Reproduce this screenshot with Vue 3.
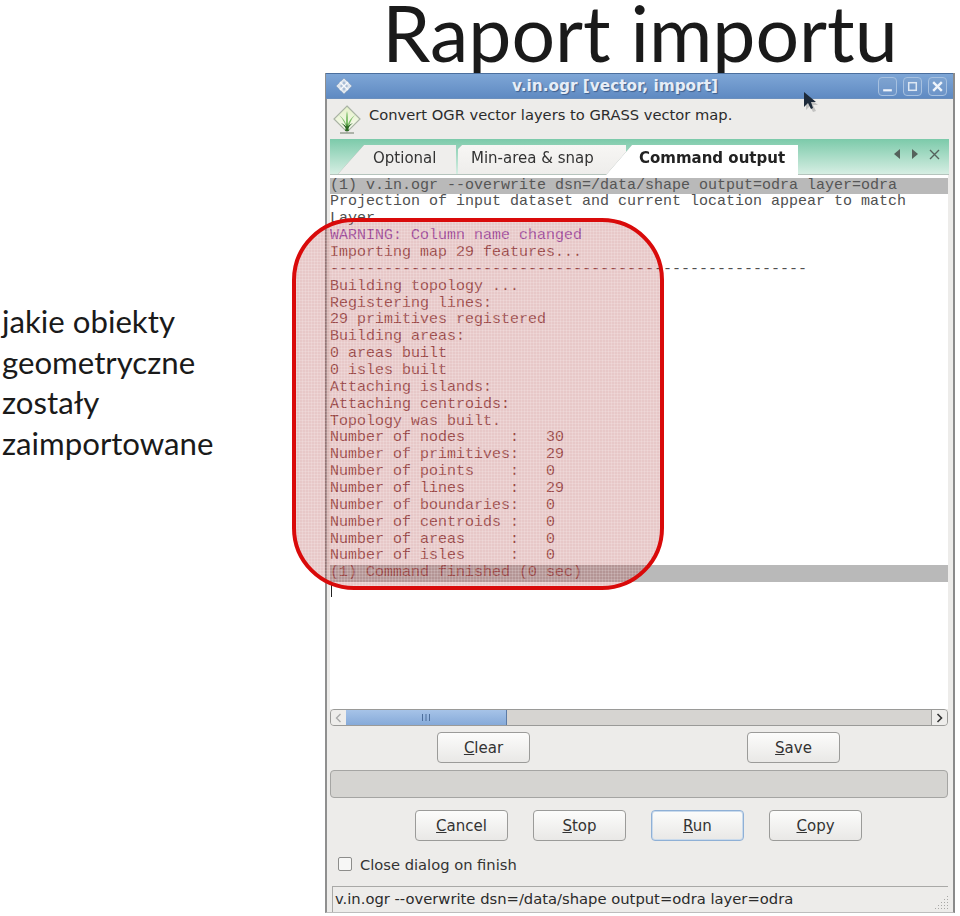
<script setup>
const lines = [
  { t: '(1) v.in.ogr --overwrite dsn=/data/shape output=odra layer=odra', c: 'cmd' },
  { t: 'Projection of input dataset and current location appear to match' },
  { t: 'Layer' },
  { t: 'WARNING: Column name changed', c: 'warn' },
  { t: 'Importing map 29 features...', c: 'hl' },
  { t: '------------------------------------', c: 'hl', rest: '-----------------' },
  { t: 'Building topology ...', c: 'hl' },
  { t: 'Registering lines:', c: 'hl' },
  { t: '29 primitives registered', c: 'hl' },
  { t: 'Building areas:', c: 'hl' },
  { t: '0 areas built', c: 'hl' },
  { t: '0 isles built', c: 'hl' },
  { t: 'Attaching islands:', c: 'hl' },
  { t: 'Attaching centroids:', c: 'hl' },
  { t: 'Topology was built.', c: 'hl' },
  { t: 'Number of nodes     :   30', c: 'hl' },
  { t: 'Number of primitives:   29', c: 'hl' },
  { t: 'Number of points    :   0', c: 'hl' },
  { t: 'Number of lines     :   29', c: 'hl' },
  { t: 'Number of boundaries:   0', c: 'hl' },
  { t: 'Number of centroids :   0', c: 'hl' },
  { t: 'Number of areas     :   0', c: 'hl' },
  { t: 'Number of isles     :   0', c: 'hl' },
  { t: '(1) Command finished (0 sec)', c: 'cmd hl' }
]
const caption = ['jakie obiekty', 'geometryczne', 'zostały', 'zaimportowane']
</script>

<template>
  <div class="page">
    <h1 class="title">Raport importu</h1>
    <div class="body">
      <div class="caption">
        <div v-for="c in caption" :key="c">{{ c }}</div>
      </div>
      <div class="window">
        <div class="titlebar">
          <svg class="wm-icon" width="18" height="18" viewBox="0 0 18 18">
            <path d="M9 1 17 9 9 17 1 9Z" fill="#dfe6ee" stroke="#8fa9c9" />
            <path d="M9 4 5 9l4 5 4-5Z" fill="#a9bdd6" />
            <path d="M5 5l8 8M13 5l-8 8" stroke="#f7f9fb" stroke-width="1.5" />
          </svg>
          <span class="wm-title">v.in.ogr [vector, import]</span>
          <div class="wm-btns">
            <span class="wm-btn"><svg width="13" height="13" viewBox="0 0 12 12"><path d="M2 9.500h8" stroke="#eef3fa" stroke-width="2" /></svg></span>
            <span class="wm-btn"><svg width="13" height="13" viewBox="0 0 12 12"><rect x="2.500" y="2.500" width="7" height="7" fill="none" stroke="#dde7f3" stroke-width="1.400" /></svg></span>
            <span class="wm-btn"><svg width="13" height="13" viewBox="0 0 12 12"><path d="M2 2l8 8M10 2l-8 8" stroke="#eef3fa" stroke-width="2.200" /></svg></span>
          </div>
        </div>

        <div class="header">
          <svg class="logo" width="28" height="32" viewBox="0 0 28 32">
            <defs>
              <linearGradient id="lg" x1="0" y1="0" x2="0" y2="1">
                <stop offset="0" stop-color="#e4f1c8" />
                <stop offset="1" stop-color="#f9fbf3" />
              </linearGradient>
            </defs>
            <path d="M14 2 27 15 14 28 1 15Z" fill="url(#lg)" stroke="#a9b3a4" stroke-width="1.200" />
            <path d="M14 26C13 21 10 15 6 11c4 3 6 6 7 9 0-5 0-9 1-13 1 4 1 8 1 13 1-3 3-6 7-9-4 4-6 10-7 15Z" fill="#7fbf6b" />
            <path d="M14 27c-1-3-3-6-6-8 3 1 5 3 6 5 1-2 3-4 6-5-3 2-5 5-6 8Z" fill="#1f5a1b" />
            <path d="M12 27l2-8 2 8Z" fill="#2c6a22" />
            <path d="M7 29h14" stroke="#6f7a68" stroke-width="1" />
          </svg>
          <span>Convert OGR vector layers to GRASS vector map.</span>
        </div>

        <div class="tabs">
          <div class="tab tab-opt"><div class="tab-in">Optional</div></div>
          <div class="tab tab-min"><div class="tab-in">Min-area &amp; snap</div></div>
          <div class="tab tab-cmd"><div class="tab-in">Command output</div></div>
          <div class="tab-nav">
            <svg width="8" height="10" viewBox="0 0 8 10"><path d="M7 0v10L1 5Z" fill="#55625c" /></svg>
            <svg width="8" height="10" viewBox="0 0 8 10"><path d="M1 0v10l6-5Z" fill="#55625c" /></svg>
            <svg width="11" height="11" viewBox="0 0 11 11"><path d="M1 1l9 9M10 1l-9 9" stroke="#55625c" stroke-width="1.400" /></svg>
          </div>
        </div>

        <div class="output">
          <div v-for="(l, i) in lines" :key="i" class="line" :class="l.c">{{ l.t }}<span v-if="l.rest" class="rest">{{ l.rest }}</span></div>
          <div class="cursor"></div>
        </div>

        <div class="scrollbar">
          <span class="sb-btn sb-left"><svg width="7" height="10" viewBox="0 0 7 10"><path d="M5.500 1 1.500 5l4 4" fill="none" stroke="#aaa" stroke-width="1.400" /></svg></span>
          <span class="sb-thumb"><svg width="10" height="7" viewBox="0 0 10 7"><path d="M1.500 0v7M5 0v7M8.500 0v7" stroke="#4d6f9c" stroke-width="1" /></svg></span>
          <span class="sb-trough"></span>
          <span class="sb-btn sb-right"><svg width="7" height="10" viewBox="0 0 7 10"><path d="M1.500 1l4 4-4 4" fill="none" stroke="#333" stroke-width="1.600" /></svg></span>
        </div>

        <div class="row row-top">
          <button class="btn"><u>C</u>lear</button>
          <button class="btn"><u>S</u>ave</button>
        </div>

        <div class="progress"></div>

        <div class="row row-main">
          <button class="btn"><u>C</u>ancel</button>
          <button class="btn"><u>S</u>top</button>
          <button class="btn btn-focus"><u>R</u>un</button>
          <button class="btn"><u>C</u>opy</button>
        </div>

        <label class="check"><span class="box"></span>Close dialog on finish</label>

        <div class="status">
          <span>v.in.ogr --overwrite dsn=/data/shape output=odra layer=odra</span>
          <span class="grip"></span>
        </div>

        <div class="highlight"></div>
        <svg class="pointer" width="16" height="22" viewBox="0 0 16 22">
          <path d="M3 4 3 19 7 15 10 21 13 20 10 14 15 14Z" fill="#9a9a9a" opacity=".5" />
          <path d="M1 1 1 16 5 12 8 18 10 17 8 11 13 11Z" fill="#1d2a3a" />
        </svg>
      </div>
    </div>
  </div>
</template>

<style>
html, body { margin: 0; background: #fff; }
</style>

<style scoped>
.page {
  width: 960px;
  height: 916px;
  overflow: hidden;
  background: #fff;
  font-family: "DejaVu Sans", sans-serif;
  color: #333;
}
.title {
  margin: 0;
  height: 73px;
  padding-left: 320px;
  text-align: center;
  font: 400 77px/59px "Lato", sans-serif;
  color: #1a1a1a;
  padding-top: 3px;
  box-sizing: border-box;
}
.body { display: flex; align-items: flex-start; }
.caption {
  width: 323px;
  margin-left: 2px;
  padding-top: 228px;
  flex: none;
  font: 400 31.200px/40.700px "Lato", sans-serif;
  color: #1a1a1a;
}
.window {
  position: relative;
  box-sizing: border-box;
  width: 630px;
  height: 840px;
  background: #edecea;
  border-left: 2px solid #8f8f8f;
  border-right: 2px solid #8a8a8a;
  border-bottom: 1px solid #bdbdbd;
  display: flex;
  flex-direction: column;
}
.titlebar {
  height: 26px;
  flex: none;
  display: flex;
  align-items: center;
  position: relative;
  margin-left: -1px;
  background: linear-gradient(#7ea6d6, #5f8ac2);
  border-top: 1px solid #4b6f9e;
  box-sizing: border-box;
  border-bottom: 1px solid #6b8fbd;
}
.wm-icon { margin-left: 9px; }
.wm-title {
  position: absolute;
  left: 186px;
  font-size: 15.300px;
  font-weight: 700;
  color: #e6edf7;
  text-shadow: 1px 1px 1px #3e5f8d;
}
.wm-btns { margin-left: auto; margin-right: 6px; display: flex; gap: 6px; }
.wm-btn {
  width: 19px;
  height: 19px;
  box-sizing: border-box;
  display: flex;
  align-items: center;
  justify-content: center;
  border: 1px solid #a7c1e0;
  border-radius: 4px;
  background: linear-gradient(#7ea3d0, #6c94c8);
}
.header {
  height: 40px;
  flex: none;
  display: flex;
  align-items: center;
  padding-left: 6px;
  font-size: 14.700px;
  color: #2b2b2b;
  background: #edecea;
}
.logo { margin-right: 8px; margin-top: 2px; flex: none; }
.header span { position: relative; top: -5px; }
.tabs {
  height: 36px;
  flex: none;
  margin: 0 4px 0 3px;
  display: flex;
  align-items: flex-end;
  background: linear-gradient(#7ccaaa, #d6eee3);
  box-sizing: border-box;
  border-bottom: 1px solid #b5c4bd;
  position: relative;
  font-size: 15px;
}
.tab { filter: drop-shadow(0 0 .6px #8b9a93); height: 29px; flex: none; }
.tab-in { height: 100%; display: flex; align-items: center; box-sizing: border-box; color: #333; padding-bottom: 4px; }
.tab-opt { margin-left: 8px; width: 118px; }
.tab-opt .tab-in {
  padding-left: 35px;
  background: #efeeec;
  clip-path: polygon(0 100%, 26px 0, 100% 0, 100% 100%);
}
.tab-min { margin-left: 2px; width: 168px; }
.tab-min .tab-in {
  padding-left: 13px;
  background: linear-gradient(#f7f6f4, #eeedeb);
  clip-path: polygon(0 4px, 4px 0, 100% 0, 100% 100%, 0 100%);
}
.tab-cmd { margin-left: -20px; width: 192px; height: 30px; margin-bottom: -1px; position: relative; }
.tab-cmd .tab-in {
  padding-left: 33px;
  padding-bottom: 5px;
  background: #fff;
  font-weight: 700;
  color: #222;
  clip-path: polygon(0 100%, 26px 0, 100% 0, 100% 100%);
}
.tab-nav {
  margin-left: auto;
  margin-right: 9px;
  margin-bottom: 5px;
  align-self: center;
  display: flex;
  align-items: center;
  gap: 10px;
}
.output {
  flex: none;
  height: 534px;
  margin: 0 5px 0 3px;
  background: #fff;
  padding-top: 2.500px;
  box-sizing: border-box;
  font: 400 15px/16.870px "Liberation Mono", monospace;
  color: #505050;
  overflow: hidden;
}
.line { white-space: pre; height: 16.870px; }
.cmd { background: #b9b9b9; color: #555; }
.warn { color: #9a52bd; }
.hl { color: #96504f; }
.rest { color: #505050; }
.cursor { width: 1px; height: 14px; background: #222; margin: 1px 0 0 1px; }
.scrollbar {
  flex: none;
  height: 17px;
  margin: 0 5px 0 3px;
  box-sizing: border-box;
  display: flex;
  background: #d6d4d1;
  border: 1px solid #9a9a98;
  border-radius: 4px;
}
.sb-btn {
  width: 15px;
  flex: none;
  display: flex;
  align-items: center;
  justify-content: center;
  background: #eeedeb;
}
.sb-left { border-radius: 3px 0 0 3px; }
.sb-right { border-left: 1px solid #9a9a98; border-radius: 0 3px 3px 0; }
.sb-thumb {
  width: 161px;
  flex: none;
  display: flex;
  align-items: center;
  justify-content: center;
  background: linear-gradient(#a6c3e8, #86aad9);
  border-right: 1px solid #5c7ba6;
  box-sizing: border-box;
}
.sb-trough { flex: 1; }
.row { flex: none; display: flex; }
.row-top { margin-top: 6px; padding-left: 110px; gap: 217px; }
.btn {
  width: 93px;
  height: 31px;
  padding: 0;
  box-sizing: border-box;
  border: 1px solid #9b9b99;
  border-radius: 4px;
  background: linear-gradient(#fcfcfb, #e9e8e6);
  font-family: "DejaVu Sans", sans-serif;
  font-size: 15px;
  color: #333;
}
.progress {
  flex: none;
  height: 28px;
  margin: 7px 5px 0 3px;
  box-sizing: border-box;
  border: 1px solid #a5a5a3;
  border-radius: 4px;
  background: #d5d4d1;
}
.row-main { margin-top: 12px; padding-left: 88px; gap: 25px; }
.btn-focus { border-color: #8fb0d6; box-shadow: inset 0 0 0 1px #c9daec; }
.check {
  flex: none;
  display: flex;
  align-items: center;
  margin-top: 13px;
  padding-left: 11px;
  height: 20px;
  font-size: 14.700px;
  color: #333;
}
.box {
  width: 14px;
  height: 14px;
  box-sizing: border-box;
  border: 1px solid #8d8d8b;
  border-radius: 2px;
  background: #f7f7f6;
  margin-right: 8px;
}
.status {
  flex: none;
  height: 26px;
  margin: 12px 5px 0 5px;
  box-sizing: border-box;
  display: flex;
  align-items: center;
  padding: 0 0 3px 2px;
  border-top: 1px solid #a9a9a7;
  border-left: 1px solid #a9a9a7;
  font-size: 14.750px;
  color: #2b2b2b;
}
.grip {
  margin-left: auto;
  align-self: flex-end;
  width: 14px;
  height: 14px;
  background-image: radial-gradient(#a8a8a6 40%, transparent 45%);
  background-size: 3px 3px;
  clip-path: polygon(100% 0, 100% 100%, 0 100%);
}
.highlight {
  position: absolute;
  left: -35px;
  top: 145px;
  width: 372px;
  height: 372px;
  box-sizing: border-box;
  border: 4px solid #d90a0a;
  border-radius: 62px;
  background-color: rgba(165, 50, 50, .27);
  background-image:
    linear-gradient(rgba(255, 255, 255, .16) 1px, transparent 1px),
    linear-gradient(90deg, rgba(255, 255, 255, .16) 1px, transparent 1px);
  background-size: 3px 3px;
}
.pointer { position: absolute; left: 476px; top: 18px; }
</style>
